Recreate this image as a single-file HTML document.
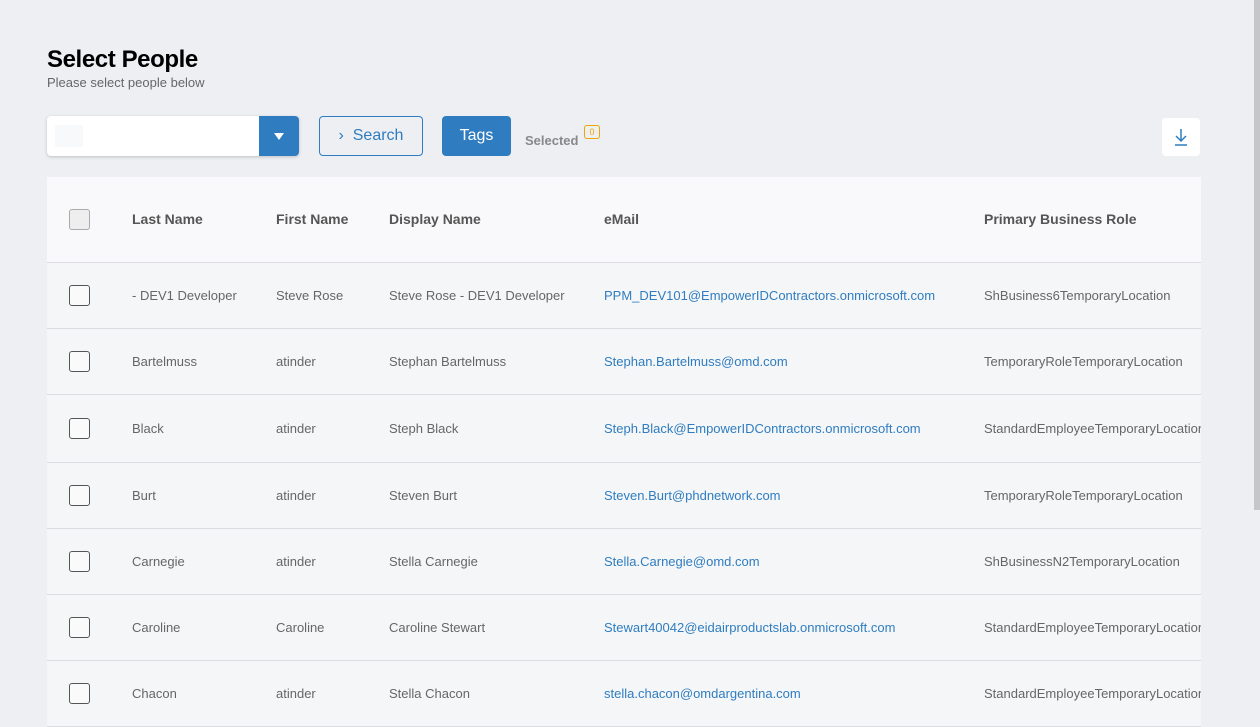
<!DOCTYPE html>
<html><head><style>
*{box-sizing:border-box;margin:0;padding:0}
body{width:1260px;height:719px;overflow:hidden;background:#eeeff3;font-family:"Liberation Sans",sans-serif;position:relative}
.sb{position:absolute;right:0;top:0;width:6px;height:719px;background:#eeeff3}
.sb div{position:absolute;left:0;top:0;width:6px;height:510px;background:#c4c6ca}
h1{position:absolute;left:47px;top:46px;font-size:24px;font-weight:bold;color:#000;letter-spacing:-0.4px}
.sub{position:absolute;left:47px;top:75px;font-size:13px;color:#666}
.sel{position:absolute;left:47px;top:116px;width:252px;height:40px;background:#fff;border-radius:4px;box-shadow:0 1px 3px rgba(0,0,0,.2);overflow:hidden}
.sel .in{position:absolute;left:8px;top:9px;width:28px;height:22px;background:#f8f9fb}
.sel .dd{position:absolute;right:0;top:0;width:40px;height:40px;background:#2f7dc0}
.sel .dd:after{content:"";position:absolute;left:15px;top:17px;border-left:5px solid transparent;border-right:5px solid transparent;border-top:7px solid #fff}
.btn{position:absolute;top:116px;height:40px;border-radius:4px;font-size:16px;display:flex;align-items:center;justify-content:center}
.search{left:319px;width:104px;border:1px solid #2f7dc0;color:#2f7dc0}
.tags{left:442px;width:69px;background:#2f7dc0;color:#fff}
.selt{position:absolute;left:525px;top:133px;font-size:13px;color:#888;font-weight:bold}
.badge{position:absolute;left:584px;top:125px;width:16px;height:14px;border:1px solid #f0a500;border-radius:3px;font-size:9px;color:#f0a500;text-align:center;line-height:12px}
.dl{position:absolute;left:1162px;top:118px;width:38px;height:38px;background:#fff;border-radius:4px}
table{position:absolute;left:47px;top:177px;width:1154px;border-collapse:collapse;table-layout:fixed}
th{height:85px;background:#f9f9fb;text-align:left;font-size:14px;color:#555;font-weight:bold;border-bottom:1px solid #dcdde0}
td{height:66px;background:#f5f6f8;font-size:13px;color:#666;border-bottom:1px solid #dcdde0;white-space:nowrap;overflow:hidden}
td.e{color:#2f7dc0}
.cb{display:inline-block;width:21px;height:21px;border:1px solid #555;border-radius:3px;background:#fafafa;margin-left:22px;vertical-align:middle}
th .cb{border-color:#aaa;background:#eee}
</style></head><body>
<div class="sb"><div></div></div>
<h1>Select People</h1>
<div class="sub">Please select people below</div>
<div class="sel"><div class="in"></div><div class="dd"></div></div>
<div class="btn search">&#8250;&nbsp; Search</div>
<div class="btn tags">Tags</div>
<div class="selt">Selected</div>
<div class="badge">0</div>
<div class="dl"><svg width="38" height="38"><path d="M19 11v12M14 18l5 5 5-5M13 27h12" stroke="#2f7dc0" stroke-width="1.5" fill="none"/></svg></div>
<table>
<colgroup><col style="width:85px"><col style="width:144px"><col style="width:113px"><col style="width:215px"><col style="width:380px"><col style="width:217px"></colgroup>
<tr><th><span class="cb"></span></th><th>Last Name</th><th>First Name</th><th>Display Name</th><th>eMail</th><th>Primary Business Role</th></tr>
<tr><td><span class="cb"></span></td><td>- DEV1 Developer</td><td>Steve Rose</td><td>Steve Rose - DEV1 Developer</td><td class="e">PPM_DEV101@EmpowerIDContractors.onmicrosoft.com</td><td>ShBusiness6TemporaryLocation</td></tr>
<tr><td><span class="cb"></span></td><td>Bartelmuss</td><td>atinder</td><td>Stephan Bartelmuss</td><td class="e">Stephan.Bartelmuss@omd.com</td><td>TemporaryRoleTemporaryLocation</td></tr>
<tr><td style="height:68px"><span class="cb"></span></td><td>Black</td><td>atinder</td><td>Steph Black</td><td class="e">Steph.Black@EmpowerIDContractors.onmicrosoft.com</td><td>StandardEmployeeTemporaryLocation</td></tr>
<tr><td><span class="cb"></span></td><td>Burt</td><td>atinder</td><td>Steven Burt</td><td class="e">Steven.Burt@phdnetwork.com</td><td>TemporaryRoleTemporaryLocation</td></tr>
<tr><td><span class="cb"></span></td><td>Carnegie</td><td>atinder</td><td>Stella Carnegie</td><td class="e">Stella.Carnegie@omd.com</td><td>ShBusinessN2TemporaryLocation</td></tr>
<tr><td><span class="cb"></span></td><td>Caroline</td><td>Caroline</td><td>Caroline Stewart</td><td class="e">Stewart40042@eidairproductslab.onmicrosoft.com</td><td>StandardEmployeeTemporaryLocation</td></tr>
<tr><td><span class="cb"></span></td><td>Chacon</td><td>atinder</td><td>Stella Chacon</td><td class="e">stella.chacon@omdargentina.com</td><td>StandardEmployeeTemporaryLocation</td></tr>
</table>
</body></html>
